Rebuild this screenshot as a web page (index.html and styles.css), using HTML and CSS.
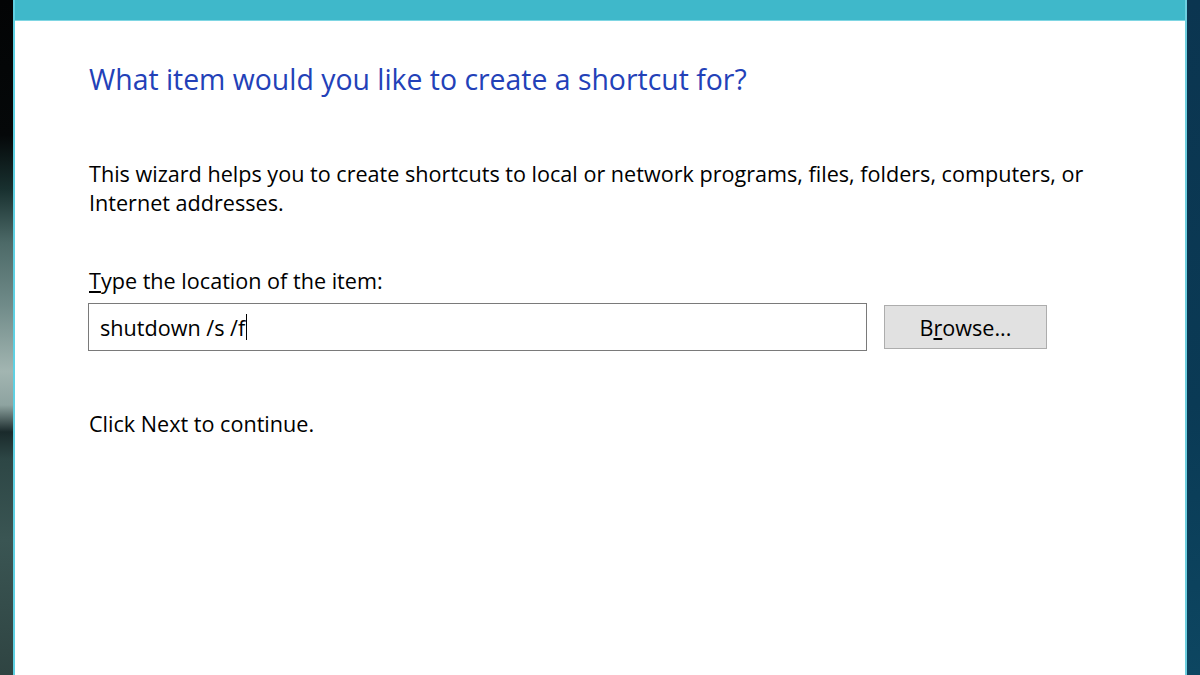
FILE: index.html
```html
<!DOCTYPE html>
<html lang="en">

<head>
    <meta charset="UTF-8">
    <meta name="viewport" content="width=device-width, initial-scale=1.0">
    <title>Create Shortcut</title>
    <link rel="stylesheet" href="styles.css">
</head>

<body>
    <div class="screen">
        <div class="wall left"></div>
        <div class="dialog">
            <div class="titlebar"></div>
            <div class="content">
                <h1 class="heading">What item would you like to create a shortcut for?</h1>
                <p class="intro">This wizard helps you to create shortcuts to local or network programs, files, folders, computers, or Internet addresses.</p>
                <label class="label" for="location"><u>T</u>ype the location of the item:</label>
                <div class="row">
                    <div class="field" id="location">shutdown /s /f<span class="caret"></span></div>
                    <div class="button">B<u>r</u>owse...</div>
                </div>
                <p class="hint">Click Next to continue.</p>
            </div>
        </div>
        <div class="wall right"></div>
    </div>
</body>

</html>
```

FILE: styles.css
```css
html, body {
    margin: 0;
    padding: 0;
    height: 100%;
}
body {
    font-family: "Open Sans", "Noto Sans", sans-serif;
    color: #000;
}
.screen {
    display: flex;
    height: 675px;
    overflow: hidden;
}
.wall {
    width: 13px;
    flex: none;
}
.wall.left {
    background: linear-gradient(to bottom, #030405 0%, #050809 20%, #18302f 28%, #4d6a68 36%, #6f8a88 45%, #a2b5b1 55%, #8ea3a0 60%, #1a2a2b 64%, #2d4645 68%, #3a5553 80%, #2f4442 100%);
}
.wall.right {
    background: linear-gradient(to bottom, #0b3550, #0a3a55 60%, #0d4661 100%);
}
.dialog {
    flex: 1;
    display: flex;
    flex-direction: column;
    background: #fff;
    border-left: 2px solid #5fd0e2;
    border-right: 2px solid #6dcfe0;
}
.titlebar {
    height: 20px;
    background: #3fb8ca;
    border-bottom: 1px solid #7fd6e3;
}

/*--------------------------*/
.content {
    padding: 39px 0 0 74px;
}
.heading {
    margin: 0;
    font-size: 28.4px;
    font-weight: normal;
    color: #2341b8;
    line-height: 38px;
}
.intro {
    margin: 61px 0 0;
    width: 1010px;
    font-size: 21.6px;
    line-height: 29px;
}
.label {
    display: block;
    margin-top: 49px;
    font-size: 21.6px;
    line-height: 29px;
}
.row {
    display: flex;
    align-items: center;
    margin-top: 8px;
}
.field {
    width: 756px;
    height: 46px;
    margin-left: -1px;
    border: 1px solid #7a7a7a;
    padding: 0 10px 0 11px;
    font-size: 21.6px;
    display: flex;
    align-items: center;
}
.caret {
    display: inline-block;
    width: 1px;
    height: 26px;
    margin-left: 1px;
    background: #000;
}
.button {
    margin-left: 17px;
    width: 161px;
    height: 42px;
    background: #e1e1e1;
    border: 1px solid #adadad;
    font-size: 21.6px;
    display: flex;
    align-items: center;
    justify-content: center;
}
.hint {
    margin: 58px 0 0;
    font-size: 21.6px;
    line-height: 29px;
}
```
